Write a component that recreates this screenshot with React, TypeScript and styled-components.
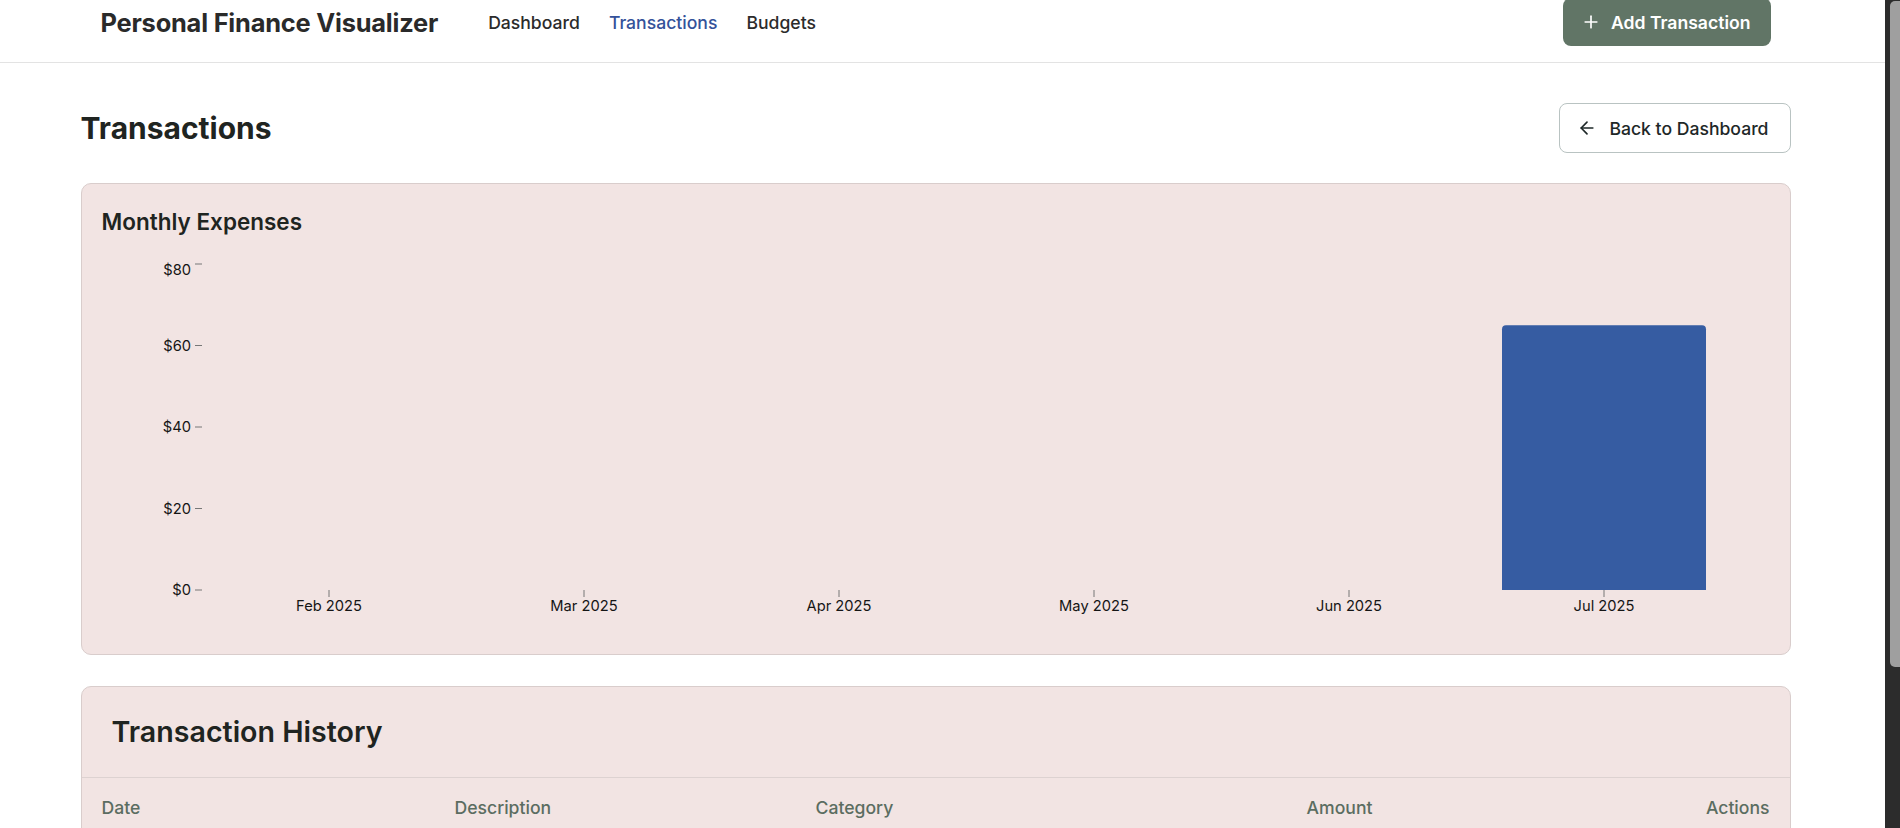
import React, { useLayoutEffect } from 'react';
import styled, { createGlobalStyle } from 'styled-components';
import { Plus, ArrowLeft, Pencil, Trash2 } from 'lucide-react';

const GlobalStyle = createGlobalStyle`
  html { background: #ffffff; scrollbar-width: none; }
  body {
    margin: 0;
    background: #ffffff;
    font-family: Inter, "Noto Sans", "Liberation Sans", sans-serif;
    color: #1f2421;
  }
  * { box-sizing: border-box; }
  ::-webkit-scrollbar { display: none; }
`;

const ScrollTrack = styled.div`
  position: fixed;
  top: 0;
  right: 0;
  width: 15px;
  height: 100vh;
  background: #2c2c2c;
  z-index: 10;
`;

const ScrollThumb = styled.div`
  position: absolute;
  top: 1px;
  left: 5px;
  right: 0;
  height: 666px;
  background: #9f9f9f;
  border-radius: 5px 0 0 5px;
`;

const Frame = styled.div`
  width: 1871px;
`;

const HeaderBar = styled.header`
  border-bottom: 1px solid #e3e3e3;
  background: #ffffff;
`;

const HeaderInner = styled.div`
  width: 1670px;
  margin: 0 auto;
  height: 78px;
  padding-bottom: 2px;
  display: flex;
  align-items: center;
`;

const Brand = styled.div`
  font-size: 25.4px;
  font-weight: 700;
  color: #2a2a2a;
  letter-spacing: -0.2px;
`;

const Nav = styled.nav`
  display: flex;
  gap: 29px;
  margin-left: 50px;
`;

const NavLink = styled.a<{ $active?: boolean }>`
  font-size: 17.6px;
  font-weight: 500;
  color: ${(p) => (p.$active ? '#34529a' : '#2b2b2b')};
  text-decoration: none;
  cursor: pointer;
`;

const PrimaryButton = styled.button`
  margin-left: auto;
  height: 48px;
  padding: 0 20px 0 18px;
  display: flex;
  align-items: center;
  gap: 10px;
  border: none;
  border-radius: 8px;
  background: #617566;
  color: #ffffff;
  font-family: inherit;
  font-size: 17.6px;
  font-weight: 600;
  cursor: pointer;
`;

const Main = styled.main`
  width: 1710px;
  margin: 0 auto;
  padding: 40px 0 40px;
  display: flex;
  flex-direction: column;
`;

const TitleRow = styled.div`
  display: flex;
  align-items: center;
  justify-content: space-between;
  margin-bottom: 30px;
`;

const PageTitle = styled.h1`
  margin: 0;
  font-size: 30px;
  font-weight: 700;
  color: #1f2421;
`;

const OutlineButton = styled.button`
  height: 50px;
  padding: 0 21px 0 17px;
  display: flex;
  align-items: center;
  gap: 12px;
  border: 1px solid #b9c3c2;
  border-radius: 8px;
  background: #ffffff;
  color: #1e2828;
  font-family: inherit;
  font-size: 17.6px;
  font-weight: 500;
  cursor: pointer;
`;

const Card = styled.section<{ $gap?: number }>`
  background: #f2e4e3;
  border: 1px solid #d9cdcc;
  border-radius: 10px;
  margin-bottom: ${(p) => p.$gap ?? 0}px;
  overflow: hidden;
`;

const ChartBody = styled.div`
  padding: 24px 20px 24px;
`;

const CardTitle = styled.h2`
  margin: 0;
  font-size: 22.5px;
  line-height: 28px;
  font-weight: 600;
  color: #1f2421;
`;

const ChartSvg = styled.svg`
  display: block;
  margin-top: 14px;
  font-family: Inter, "Noto Sans", sans-serif;
`;

const HistoryHeader = styled.div`
  padding: 27px 30px 27px;
  border-bottom: 1px solid #ddd2d1;
`;

const HistoryTitle = styled.h2`
  margin: 0;
  font-size: 28.6px;
  line-height: 36px;
  font-weight: 600;
  color: #1f2421;
`;

const Row = styled.div<{ $head?: boolean }>`
  display: grid;
  grid-template-columns: 353px 361px 298px 299px 1fr;
  height: ${(p) => (p.$head ? 60 : 64)}px;
  align-items: center;
  border-bottom: 1px solid #ddd2d1;
  font-size: 17.6px;
  font-weight: ${(p) => (p.$head ? 500 : 400)};
  color: ${(p) => (p.$head ? '#5b6d61' : '#1f2421')};
`;

const Cell = styled.div<{ $align?: 'left' | 'right' }>`
  padding: 0 20px;
  text-align: ${(p) => p.$align ?? 'left'};
  display: flex;
  justify-content: ${(p) => (p.$align === 'right' ? 'flex-end' : 'flex-start')};
  gap: 8px;
`;

const IconButton = styled.button`
  width: 36px;
  height: 36px;
  display: flex;
  align-items: center;
  justify-content: center;
  border: 1px solid #b9c3c2;
  border-radius: 6px;
  background: #ffffff;
  color: #1e2828;
  cursor: pointer;
`;

const months = [
  { label: 'Feb 2025', value: 0 },
  { label: 'Mar 2025', value: 0 },
  { label: 'Apr 2025', value: 0 },
  { label: 'May 2025', value: 0 },
  { label: 'Jun 2025', value: 0 },
  { label: 'Jul 2025', value: 65 },
];

const transactions = [
  { date: 'Jul 14, 2025', description: 'Groceries', category: 'Food', amount: '$45.00' },
  { date: 'Jul 09, 2025', description: 'Bus pass', category: 'Transport', amount: '$20.00' },
];

function ExpensesChart() {
  const width = 1668;
  const height = 380;
  const baseY = 340;
  const perUnit = 4.075;
  const bandStart = 99.5;
  const band = 255;
  const ticks = [0, 20, 40, 60, 80];
  return (
    <ChartSvg width={width} height={height} viewBox={`0 0 ${width} ${height}`}>
      {ticks.map((t) => {
        const y = baseY - t * perUnit;
        const labelY = y + 5 + (t === 80 ? 6 : 0);
        return (
          <g key={t}>
            <line x1={93} x2={100} y1={y} y2={y} stroke="#777" strokeWidth={1} />
            <text x={89} y={labelY} textAnchor="end" fontSize={14.7} fill="#151515">
              ${t}
            </text>
          </g>
        );
      })}
      {months.map((m, i) => {
        const cx = bandStart + band * i + band / 2;
        const barW = band * 0.8;
        const h = m.value * perUnit;
        const x = cx - barW / 2;
        const top = baseY - h;
        const r = 4;
        return (
          <g key={m.label}>
            {m.value > 0 && (
              <path
                d={`M${x},${baseY} L${x},${top + r} Q${x},${top} ${x + r},${top} L${x + barW - r},${top} Q${x + barW},${top} ${x + barW},${top + r} L${x + barW},${baseY} Z`}
                fill="#365ca2"
              />
            )}
            <line x1={cx} x2={cx} y1={baseY} y2={baseY + 7} stroke="#777" strokeWidth={1} />
            <text x={cx} y={361} textAnchor="middle" fontSize={14.7} fill="#151515">
              {m.label}
            </text>
          </g>
        );
      })}
    </ChartSvg>
  );
}

export default function App() {
  useLayoutEffect(() => {
    window.scrollTo(0, 16);
  }, []);

  return (
    <>
      <GlobalStyle />
      <ScrollTrack aria-hidden>
        <ScrollThumb />
      </ScrollTrack>
      <HeaderBar>
        <Frame>
          <HeaderInner>
            <Brand>Personal Finance Visualizer</Brand>
            <Nav>
              <NavLink>Dashboard</NavLink>
              <NavLink $active>Transactions</NavLink>
              <NavLink>Budgets</NavLink>
            </Nav>
            <PrimaryButton>
              <Plus size={20} strokeWidth={2} />
              Add Transaction
            </PrimaryButton>
          </HeaderInner>
        </Frame>
      </HeaderBar>
      <Frame>
        <Main>
          <TitleRow>
            <PageTitle>Transactions</PageTitle>
            <OutlineButton>
              <ArrowLeft size={20} strokeWidth={2} />
              Back to Dashboard
            </OutlineButton>
          </TitleRow>
          <Card $gap={31}>
            <ChartBody>
              <CardTitle>Monthly Expenses</CardTitle>
              <ExpensesChart />
            </ChartBody>
          </Card>
          <Card>
            <HistoryHeader>
              <HistoryTitle>Transaction History</HistoryTitle>
            </HistoryHeader>
            <Row $head>
              <Cell>Date</Cell>
              <Cell>Description</Cell>
              <Cell>Category</Cell>
              <Cell $align="right">Amount</Cell>
              <Cell $align="right">Actions</Cell>
            </Row>
            {transactions.map((t) => (
              <Row key={t.date + t.description}>
                <Cell>{t.date}</Cell>
                <Cell>{t.description}</Cell>
                <Cell>{t.category}</Cell>
                <Cell $align="right">{t.amount}</Cell>
                <Cell $align="right">
                  <IconButton aria-label="Edit">
                    <Pencil size={16} />
                  </IconButton>
                  <IconButton aria-label="Delete">
                    <Trash2 size={16} />
                  </IconButton>
                </Cell>
              </Row>
            ))}
          </Card>
        </Main>
      </Frame>
    </>
  );
}
